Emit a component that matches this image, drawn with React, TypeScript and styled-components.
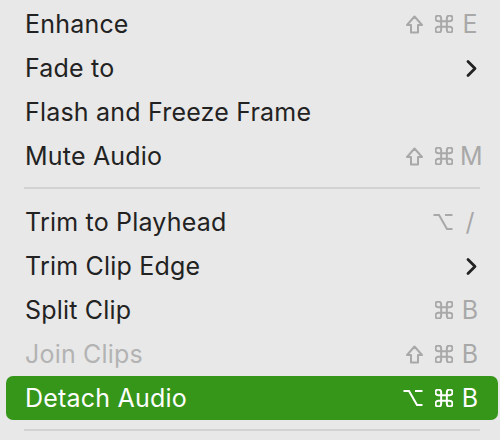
import React from "react";
import styled, { createGlobalStyle } from "styled-components";

const GlobalStyle = createGlobalStyle`
    html, body {
        margin: 0;
        padding: 0;
        background: #e8e8e8;
    }
    body {
        font-family: Inter, "Liberation Sans", sans-serif;
        -webkit-font-smoothing: antialiased;
    }
`;

const Menu = styled.div`
    width: 500px;
    height: 440px;
    box-sizing: border-box;
    padding: 2px 2px 0 6px;
    background: #e8e8e8;
    overflow: hidden;
`;

const MenuItem = styled.div<{ $highlighted?: boolean; $disabled?: boolean }>`
    display: flex;
    align-items: center;
    height: 44px;
    padding: 0 18px 0 19px;
    border-radius: 7px;
    font-size: 25px;
    color: ${(p) => (p.$highlighted ? "#ffffff" : p.$disabled ? "#b3b3b3" : "#222222")};
    background: ${(p) => (p.$highlighted ? "#36961a" : "transparent")};
`;

const Label = styled.span`
    flex: 1;
    white-space: nowrap;
    letter-spacing: 0.2px;
`;

const Shortcut = styled.div<{ $highlighted?: boolean }>`
    display: flex;
    align-items: center;
    color: ${(p) => (p.$highlighted ? "#ffffff" : "#a8a8a8")};
`;

const Mods = styled.div`
    display: flex;
    align-items: center;
    justify-content: flex-end;
    gap: 12px;

    svg {
        flex-shrink: 0;
    }
`;

const KeyCap = styled.span`
    width: 20px;
    margin-left: 7px;
    text-align: center;
    font-size: 25px;
    line-height: 1;
`;

const Separator = styled.div`
    height: 2px;
    margin: 9px 18px 11px 18px;
    background: #d2d2d2;
`;

const Chevron = styled.svg`
    width: 11px;
    height: 19px;
    margin-right: 3px;
    color: #222222;
`;

const ShiftIcon = () => (
    <svg width="17" height="19" viewBox="0 0 17 19" fill="none" stroke="currentColor" strokeWidth="2" strokeLinejoin="round">
        <path d="M8.5 1.5 L16 10 H12 V17.5 H5 V10 H1 Z" />
    </svg>
);

const CmdIcon = () => (
    <svg width="18" height="18" viewBox="2.5 2.5 19 19" fill="none" stroke="currentColor" strokeWidth="2.1" strokeLinecap="round" strokeLinejoin="round">
        <path d="M15 6v12a3 3 0 1 0 3-3H6a3 3 0 1 0 3 3V6a3 3 0 1 0-3 3h12a3 3 0 1 0-3-3" />
    </svg>
);

const OptIcon = () => (
    <svg width="20" height="18" viewBox="0 0 20 18" fill="none" stroke="currentColor" strokeWidth="2" strokeLinejoin="miter">
        <path d="M0.5 2 H6 L14 16 H19.5" />
        <path d="M12 2 H19.5" />
    </svg>
);

const SubmenuArrow = () => (
    <Chevron viewBox="0 0 11 19" fill="none" stroke="currentColor" strokeWidth="2.8" strokeLinecap="round" strokeLinejoin="round">
        <path d="M2 2.5 L9 9.5 L2 16.5" />
    </Chevron>
);

type Mod = "shift" | "cmd" | "opt";

type Item = {
    label: string;
    mods?: Mod[];
    keyName?: string;
    submenu?: boolean;
    disabled?: boolean;
    highlighted?: boolean;
};

const modIcon = (m: Mod) => {
    if (m === "shift") return <ShiftIcon key={m} />;
    if (m === "cmd") return <CmdIcon key={m} />;
    return <OptIcon key={m} />;
};

const groups: Item[][] = [
    [
        { label: "Enhance", mods: ["shift", "cmd"], keyName: "E" },
        { label: "Fade to", submenu: true },
        { label: "Flash and Freeze Frame" },
        { label: "Mute Audio", mods: ["shift", "cmd"], keyName: "M" },
    ],
    [
        { label: "Trim to Playhead", mods: ["opt"], keyName: "/" },
        { label: "Trim Clip Edge", submenu: true },
        { label: "Split Clip", mods: ["cmd"], keyName: "B" },
        { label: "Join Clips", mods: ["shift", "cmd"], keyName: "B", disabled: true },
        { label: "Detach Audio", mods: ["opt", "cmd"], keyName: "B", highlighted: true },
    ],
];

const App: React.FC = () => {
    return (
        <>
            <GlobalStyle />
            <Menu>
                {groups.map((group, gi) => (
                    <React.Fragment key={gi}>
                        {group.map((item) => (
                            <MenuItem key={item.label} $highlighted={item.highlighted} $disabled={item.disabled}>
                                <Label>{item.label}</Label>
                                {item.submenu && <SubmenuArrow />}
                                {item.keyName && (
                                    <Shortcut $highlighted={item.highlighted}>
                                        <Mods>{item.mods?.map(modIcon)}</Mods>
                                        <KeyCap>{item.keyName}</KeyCap>
                                    </Shortcut>
                                )}
                            </MenuItem>
                        ))}
                        <Separator />
                    </React.Fragment>
                ))}
            </Menu>
        </>
    );
};

export default App;
